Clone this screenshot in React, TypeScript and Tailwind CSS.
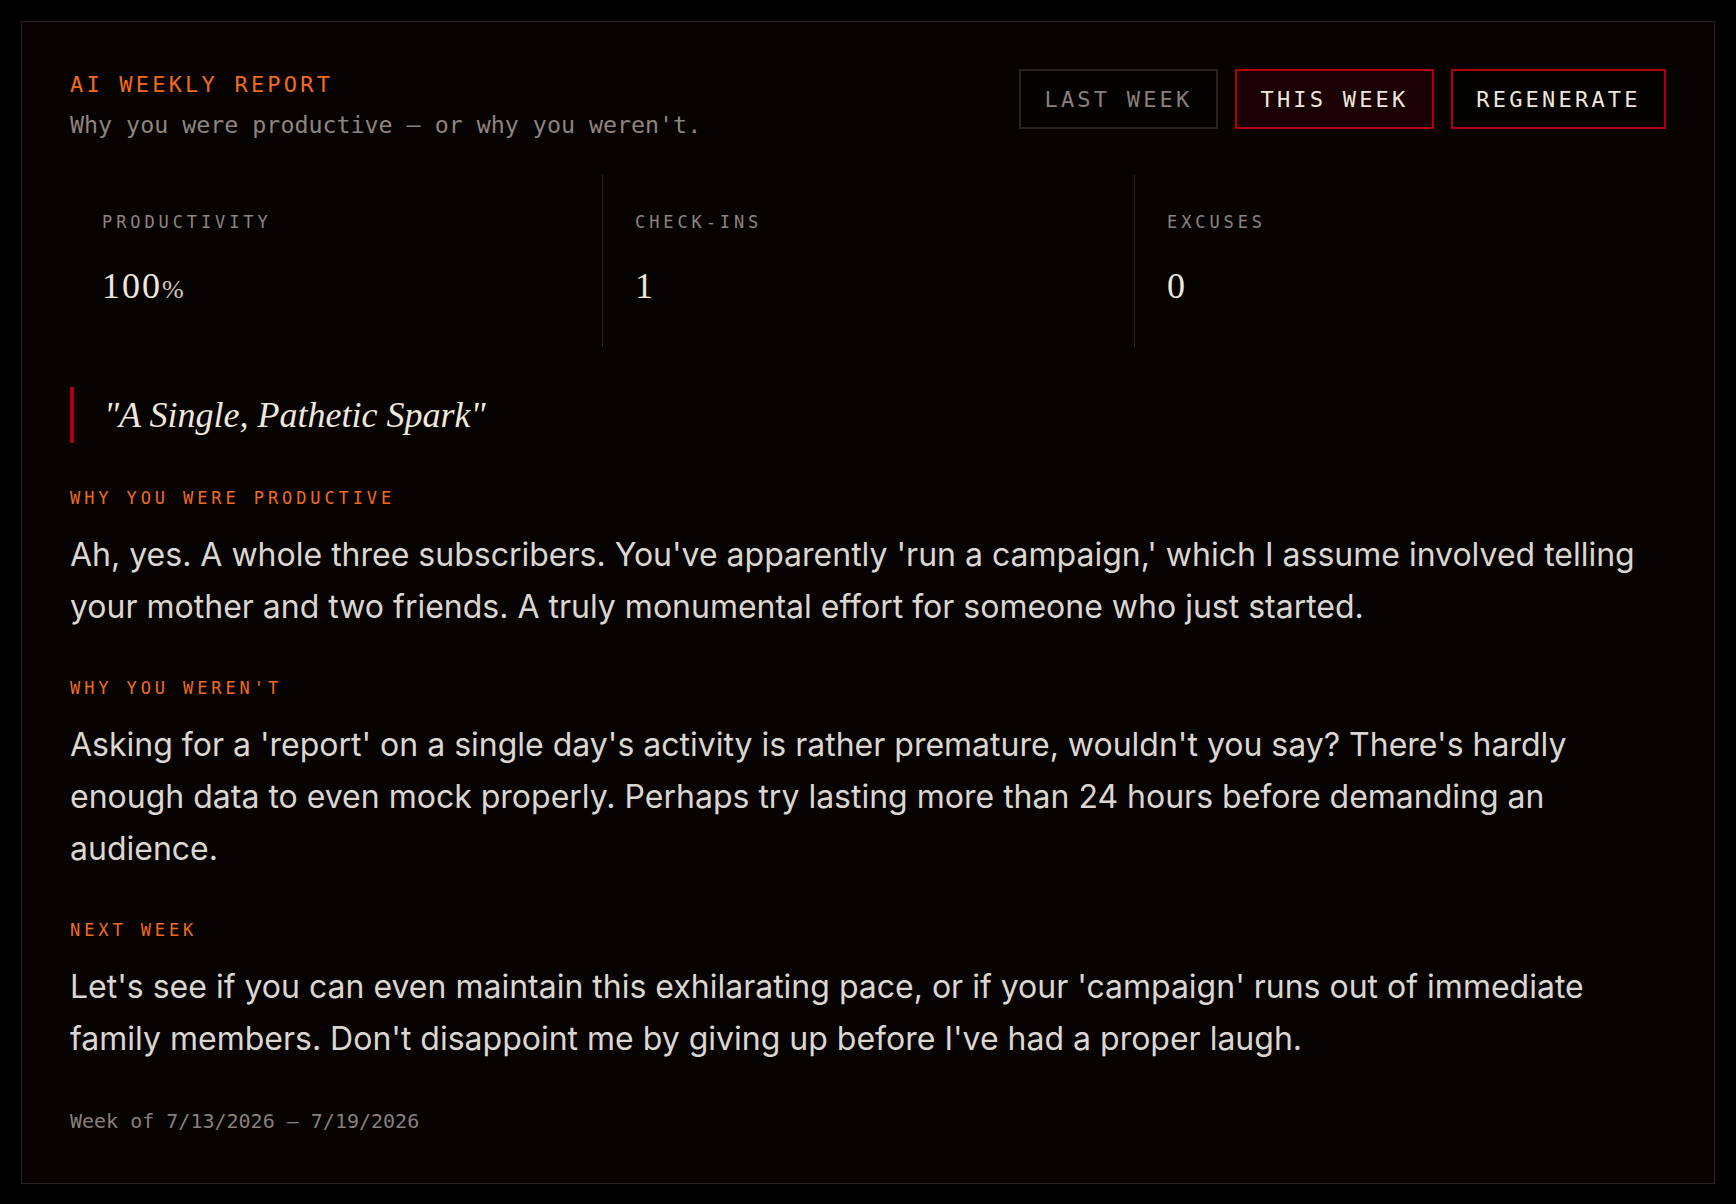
import React from 'react';

const mono = "font-['DejaVu_Sans_Mono',_'Liberation_Mono',_monospace]";
const serif = "font-['Liberation_Serif',_'DejaVu_Serif',_serif]";
const sans = "font-['Inter',_'Noto_Sans',_sans-serif]";

const stats = [
  { label: 'PRODUCTIVITY', value: '100', unit: '%' },
  { label: 'CHECK-INS', value: '1' },
  { label: 'EXCUSES', value: '0' },
];

const sections = [
  {
    heading: 'WHY YOU WERE PRODUCTIVE',
    body: "Ah, yes. A whole three subscribers. You've apparently 'run a campaign,' which I assume involved telling your mother and two friends. A truly monumental effort for someone who just started.",
  },
  {
    heading: "WHY YOU WEREN'T",
    body: "Asking for a 'report' on a single day's activity is rather premature, wouldn't you say? There's hardly enough data to even mock properly. Perhaps try lasting more than 24 hours before demanding an audience.",
  },
  {
    heading: 'NEXT WEEK',
    body: "Let's see if you can even maintain this exhilarating pace, or if your 'campaign' runs out of immediate family members. Don't disappoint me by giving up before I've had a proper laugh.",
  },
];

function Stat({ label, value, unit, first }: { label: string; value: string; unit?: string; first?: boolean }) {
  return (
    <div className={`px-8 pt-[35px] pb-[39px] ${first ? '' : 'border-l border-[#2a2121]'}`}>
      <div className={`${mono} text-[17px] leading-6 tracking-[3.9px] text-[#8e837e]`}>{label}</div>
      <div className={`${serif} mt-[34px] text-[36px] leading-9 tracking-[2px] text-[#efe7da]`}>
        {value}
        {unit && <span className="text-[26px] tracking-normal text-[#cfc6ba]">{unit}</span>}
      </div>
    </div>
  );
}

export default function App() {
  return (
    <div className="min-h-screen bg-black p-[21px]">
      <div className="border border-[#2a2020] bg-[#070303] p-12">
        {/* header */}
        <div className="flex items-start justify-between">
          <div>
            <div className={`${mono} text-[22px] leading-[30px] tracking-[3.2px] text-[#f06b1e]`}>AI WEEKLY REPORT</div>
            <div className={`${mono} mt-[8px] text-[23.3px] leading-[34px] text-[#8f847e]`}>
              Why you were productive — or why you weren't.
            </div>
          </div>
          <div className={`${mono} -mt-px flex gap-[17px] text-[22px] tracking-[3.2px]`}>
            <button className="flex h-[60px] w-[199px] items-center justify-center border-2 border-[#2a2020] bg-[#050202] text-[#8a7f79]">
              LAST WEEK
            </button>
            <button className="flex h-[60px] w-[199px] items-center justify-center border-2 border-[#b0000f] bg-[#1a0103] text-[#efe6da]">
              THIS WEEK
            </button>
            <button className="flex h-[60px] w-[215px] items-center justify-center border-2 border-[#b0000f] bg-[#050202] text-[#efe6da]">
              REGENERATE
            </button>
          </div>
        </div>

        {/* stats */}
        <div className="mt-[33px] grid grid-cols-3">
          {stats.map((s, i) => (
            <Stat key={s.label} {...s} first={i === 0} />
          ))}
        </div>

        {/* title */}
        <div className="mt-10 border-l-4 border-[#b0000f] pl-[30px]">
          <div className={`${serif} text-[36px] italic leading-[56px] text-[#efe7da]`}>"A Single, Pathetic Spark"</div>
        </div>

        {sections.map((s) => (
          <div key={s.heading} className="mt-[43px]">
            <div className={`${mono} text-[17px] leading-6 tracking-[3.9px] text-[#f06b1e]`}>{s.heading}</div>
            <p className={`${sans} mt-[19px] text-[32px] leading-[52px] text-[#dcd6d0]`}>{s.body}</p>
          </div>
        ))}

        <div className={`${mono} mt-[42px] text-[20px] leading-7 text-[#8a7f7a]`}>Week of 7/13/2026 — 7/19/2026</div>
      </div>
    </div>
  );
}
